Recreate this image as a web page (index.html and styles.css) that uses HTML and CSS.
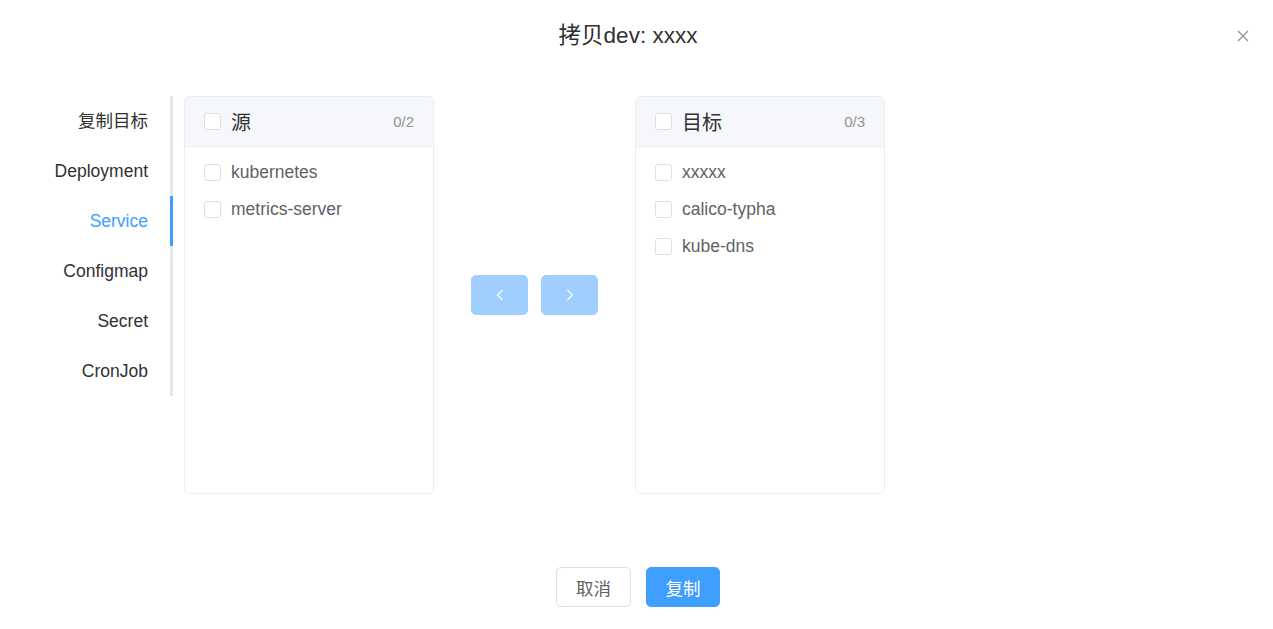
FILE: index.html
```html
<!DOCTYPE html>
<html lang="zh-CN">
<head>
<meta charset="utf-8">
<title>拷贝</title>
<link rel="stylesheet" href="styles.css">
</head>
<body>
<div class="dialog">
  <div class="dialog-header">
    <span class="dialog-title">拷贝dev: xxxx</span>
    <button class="dialog-close" aria-label="关闭">
      <svg width="12" height="12" viewBox="0 0 12 12"><path d="M1 1L11 11M11 1L1 11" stroke="#909399" stroke-width="1.3" fill="none"/></svg>
    </button>
  </div>
  <div class="dialog-body">
    <div class="tabs">
      <div class="tab">复制目标</div>
      <div class="tab">Deployment</div>
      <div class="tab active">Service</div>
      <div class="tab">Configmap</div>
      <div class="tab">Secret</div>
      <div class="tab">CronJob</div>
    </div>
    <div class="transfer">
      <div class="panel">
        <div class="panel-header">
          <span class="checkbox"></span>
          <span class="panel-title">源</span>
          <span class="panel-count">0/2</span>
        </div>
        <div class="panel-body">
          <div class="item"><span class="checkbox"></span><span class="item-label">kubernetes</span></div>
          <div class="item"><span class="checkbox"></span><span class="item-label">metrics-server</span></div>
        </div>
      </div>
      <div class="transfer-buttons">
        <button class="arrow-btn" aria-label="左移">
          <svg width="8" height="12" viewBox="0 0 8 12"><path d="M6.5 1L1.5 6L6.5 11" stroke="#fff" stroke-width="1.2" fill="none"/></svg>
        </button>
        <button class="arrow-btn" aria-label="右移">
          <svg width="8" height="12" viewBox="0 0 8 12"><path d="M1.5 1L6.5 6L1.5 11" stroke="#fff" stroke-width="1.2" fill="none"/></svg>
        </button>
      </div>
      <div class="panel">
        <div class="panel-header">
          <span class="checkbox"></span>
          <span class="panel-title">目标</span>
          <span class="panel-count">0/3</span>
        </div>
        <div class="panel-body">
          <div class="item"><span class="checkbox"></span><span class="item-label">xxxxx</span></div>
          <div class="item"><span class="checkbox"></span><span class="item-label">calico-typha</span></div>
          <div class="item"><span class="checkbox"></span><span class="item-label">kube-dns</span></div>
        </div>
      </div>
    </div>
  </div>
  <div class="dialog-footer">
    <button class="btn btn-default">取消</button>
    <button class="btn btn-primary">复制</button>
  </div>
</div>
</body>
</html>
```

FILE: styles.css
```css
* { box-sizing: border-box; }
html, body {
  margin: 0;
  padding: 0;
  background: #fff;
}
body {
  font-family: "Liberation Sans", Arial, "Noto Sans CJK SC", sans-serif;
  color: #606266;
  width: 1273px;
  height: 629px;
  overflow: hidden;
}
button {
  font-family: inherit;
  cursor: pointer;
}
.dialog {
  position: relative;
  width: 1273px;
  height: 629px;
}
.dialog-header {
  padding: 21px 17px 0 0;
  height: 51px;
  text-align: center;
}
.dialog-title {
  font-size: 22.5px;
  line-height: 30px;
  color: #303133;
}
.dialog-close {
  position: absolute;
  top: 30px;
  right: 24px;
  width: 12px;
  height: 12px;
  padding: 0;
  border: none;
  background: none;
  display: flex;
}
.dialog-body {
  display: flex;
  align-items: flex-start;
  padding-top: 45px;
}
.tabs {
  width: 173px;
  display: flex;
  flex-direction: column;
  border-right: 3px solid #e4e7ed;
}
.tab {
  position: relative;
  height: 50px;
  line-height: 50px;
  text-align: right;
  padding-right: 22px;
  font-size: 17.5px;
  color: #303133;
}
.tab.active {
  color: #409eff;
}
.tab.active::after {
  content: "";
  position: absolute;
  right: -3px;
  top: 0;
  width: 3px;
  height: 50px;
  background: #409eff;
}
.transfer {
  display: flex;
  align-items: center;
  margin-left: 11px;
}
.panel {
  width: 250px;
  height: 398px;
  border: 1px solid #ebeef5;
  border-radius: 5px;
  background: #fff;
  overflow: hidden;
}
.panel-header {
  height: 50px;
  background: #f5f7fa;
  border-bottom: 1px solid #ebeef5;
  display: flex;
  align-items: center;
  padding: 0 19px 0 19px;
}
.checkbox {
  display: inline-block;
  width: 17px;
  height: 17px;
  border: 1px solid #dcdfe6;
  border-radius: 3px;
  background: #fff;
  flex: none;
}
.panel-title {
  margin-left: 10px;
  font-size: 20px;
  color: #303133;
  flex: 1;
}
.panel-count {
  font-size: 15px;
  color: #909399;
}
.panel-body {
  padding-top: 7px;
}
.item {
  height: 37px;
  display: flex;
  align-items: center;
  padding-left: 19px;
}
.item-label {
  margin-left: 10px;
  font-size: 17.5px;
  color: #606266;
}
.transfer-buttons {
  display: flex;
  gap: 13px;
  padding: 0 37px;
}
.arrow-btn {
  width: 57px;
  height: 40px;
  border: 1px solid #a0cfff;
  background: #a0cfff;
  border-radius: 5px;
  display: flex;
  align-items: center;
  justify-content: center;
  padding: 0;
}
.dialog-footer {
  display: flex;
  justify-content: center;
  gap: 15px;
  padding-left: 3px;
  margin-top: 73px;
}
.btn {
  height: 40px;
  width: 75px;
  border-radius: 5px;
  font-size: 17.5px;
  padding: 0;
}
.btn-default {
  background: #fff;
  border: 1px solid #dcdfe6;
  color: #606266;
}
.btn-primary {
  width: 74px;
  background: #409eff;
  border: 1px solid #409eff;
  color: #fff;
}
```
